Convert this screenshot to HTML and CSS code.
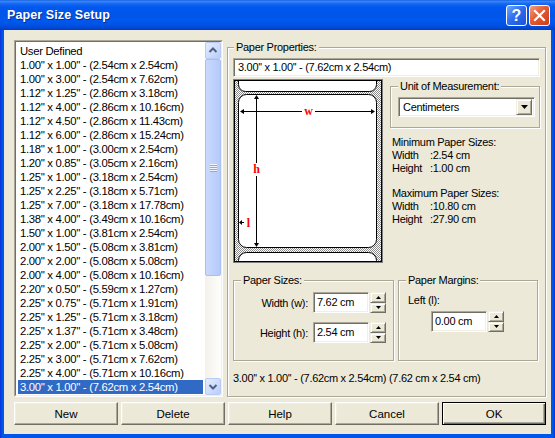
FILE: index.html
```html
<!DOCTYPE html>
<html>
<head>
<meta charset="utf-8">
<link rel="stylesheet" href="styles.css">
</head>
<body>
<div class="window">
  <div class="titlebar">
    <span class="title">Paper Size Setup</span>
    <div class="tb-btns">
      <div class="tb-btn tb-help">?</div>
      <div class="tb-btn tb-close">
        <svg width="19" height="19" viewBox="0 0 19 19"><path d="M5 5 L14 14 M14 5 L5 14" stroke="#fff" stroke-width="2.2" stroke-linecap="square"/></svg>
      </div>
    </div>
  </div>
  <div class="client">
    <div class="main">
      <div class="listbox">
        <div class="listbox-in">
          <div class="rows">
            <div class="row">User Defined</div>
            <div class="row">1.00'' x 1.00'' - (2.54cm x 2.54cm)</div>
            <div class="row">1.00'' x 3.00'' - (2.54cm x 7.62cm)</div>
            <div class="row">1.12'' x 1.25'' - (2.86cm x 3.18cm)</div>
            <div class="row">1.12'' x 4.00'' - (2.86cm x 10.16cm)</div>
            <div class="row">1.12'' x 4.50'' - (2.86cm x 11.43cm)</div>
            <div class="row">1.12'' x 6.00'' - (2.86cm x 15.24cm)</div>
            <div class="row">1.18'' x 1.00'' - (3.00cm x 2.54cm)</div>
            <div class="row">1.20'' x 0.85'' - (3.05cm x 2.16cm)</div>
            <div class="row">1.25'' x 1.00'' - (3.18cm x 2.54cm)</div>
            <div class="row">1.25'' x 2.25'' - (3.18cm x 5.71cm)</div>
            <div class="row">1.25'' x 7.00'' - (3.18cm x 17.78cm)</div>
            <div class="row">1.38'' x 4.00'' - (3.49cm x 10.16cm)</div>
            <div class="row">1.50'' x 1.00'' - (3.81cm x 2.54cm)</div>
            <div class="row">2.00'' x 1.50'' - (5.08cm x 3.81cm)</div>
            <div class="row">2.00'' x 2.00'' - (5.08cm x 5.08cm)</div>
            <div class="row">2.00'' x 4.00'' - (5.08cm x 10.16cm)</div>
            <div class="row">2.20'' x 0.50'' - (5.59cm x 1.27cm)</div>
            <div class="row">2.25'' x 0.75'' - (5.71cm x 1.91cm)</div>
            <div class="row">2.25'' x 1.25'' - (5.71cm x 3.18cm)</div>
            <div class="row">2.25'' x 1.37'' - (5.71cm x 3.48cm)</div>
            <div class="row">2.25'' x 2.00'' - (5.71cm x 5.08cm)</div>
            <div class="row">2.25'' x 3.00'' - (5.71cm x 7.62cm)</div>
            <div class="row">2.25'' x 4.00'' - (5.71cm x 10.16cm)</div>
            <div class="row sel">3.00'' x 1.00'' - (7.62cm x 2.54cm)</div>
            <div class="row">3.00'' x 2.00'' - (7.62cm x 5.08cm)</div>
          </div>
          <div class="vscroll">
            <div class="sb-btn">
              <svg width="14" height="15" viewBox="0 0 14 15"><path d="M3.5 9 L7 5.5 L10.5 9" fill="none" stroke="#4D6185" stroke-width="2"/></svg>
            </div>
            <div class="sb-thumb">
              <div class="grip"><i></i><i></i><i></i><i></i></div>
            </div>
            <div class="sb-track"></div>
            <div class="sb-btn">
              <svg width="14" height="15" viewBox="0 0 14 15"><path d="M3.5 6 L7 9.5 L10.5 6" fill="none" stroke="#4D6185" stroke-width="2"/></svg>
            </div>
          </div>
        </div>
      </div>

      <fieldset class="group props">
        <legend>Paper Properties:</legend>
        <div class="field">3.00'' x 1.00'' - (7.62cm x 2.54cm)</div>
        <div class="mid">
          <svg class="diagram" width="150" height="184" viewBox="0 0 150 184">
            <defs>
              <pattern id="hatch" width="2" height="2" patternUnits="userSpaceOnUse">
                <rect width="2" height="2" fill="#ffffff"/>
                <rect width="1" height="1" fill="#8a8a8a"/>
                <rect x="1" y="1" width="1" height="1" fill="#8a8a8a"/>
              </pattern>
            </defs>
            <rect x="0" y="0" width="150" height="184" fill="url(#hatch)"/>
            <rect x="5.5" y="-12" width="138" height="24.5" rx="7" fill="#fff" stroke="#000"/>
            <rect x="5.5" y="15.5" width="138" height="153" rx="8" fill="#fff" stroke="#000"/>
            <rect x="5.5" y="173.5" width="138" height="30" rx="8" fill="#fff" stroke="#000"/>
            <path d="M8 32.5 H69 M82 32.5 H141" stroke="#000" stroke-width="1"/>
            <path d="M7 32.5 L11 30 L11 35 Z M142 32.5 L138 30 L138 35 Z" fill="#000"/>
            <text x="75.5" y="35.5" class="dlabel" text-anchor="middle">w</text>
            <path d="M23.5 18 V84 M23.5 97 V166" stroke="#000" stroke-width="1"/>
            <path d="M23.5 16 L21 20 L26 20 Z M23.5 168 L21 164 L26 164 Z" fill="#000"/>
            <text x="23.5" y="94" class="dlabel" text-anchor="middle">h</text>
            <path d="M7 143.5 H11" stroke="#000" stroke-width="1"/>
            <path d="M6 143.5 L9 141 L9 146 Z" fill="#000"/>
            <text x="15.5" y="147.5" class="dlabel" text-anchor="middle">l</text>
            <rect x="0.5" y="0.5" width="149" height="183" fill="none" stroke="#808080"/>
            <rect x="1.5" y="1.5" width="147" height="181" fill="none" stroke="#000"/>
          </svg>
          <div class="side">
            <fieldset class="group unit">
              <legend>Unit of Measurement:</legend>
              <div class="combo">
                <span class="combo-text">Centimeters</span>
                <span class="dd-btn"><svg width="7" height="4" viewBox="0 0 7 4"><path d="M0 0 H7 L3.5 4 Z" fill="#000"/></svg></span>
              </div>
            </fieldset>
            <div class="limits">
              <div>Minimum Paper Sizes:</div>
              <div><span class="lk">Width</span>:2.54 cm</div>
              <div><span class="lk">Height</span>:1.00 cm</div>
              <div class="blank"></div>
              <div>Maximum Paper Sizes:</div>
              <div><span class="lk">Width</span>:10.80 cm</div>
              <div><span class="lk">Height</span>:27.90 cm</div>
            </div>
          </div>
        </div>
        <div class="groups">
          <fieldset class="group sizes">
            <legend>Paper Sizes:</legend>
            <div class="srow">
              <span class="slabel">Width (w):</span>
              <div class="num">7.62 cm</div>
              <div class="spin">
                <div class="spin-btn"><svg width="5" height="3" viewBox="0 0 5 3"><path d="M2.5 0 L5 3 H0 Z" fill="#000"/></svg></div>
                <div class="spin-btn"><svg width="5" height="3" viewBox="0 0 5 3"><path d="M0 0 H5 L2.5 3 Z" fill="#000"/></svg></div>
              </div>
            </div>
            <div class="srow">
              <span class="slabel">Height (h):</span>
              <div class="num">2.54 cm</div>
              <div class="spin">
                <div class="spin-btn"><svg width="5" height="3" viewBox="0 0 5 3"><path d="M2.5 0 L5 3 H0 Z" fill="#000"/></svg></div>
                <div class="spin-btn"><svg width="5" height="3" viewBox="0 0 5 3"><path d="M0 0 H5 L2.5 3 Z" fill="#000"/></svg></div>
              </div>
            </div>
          </fieldset>
          <fieldset class="group margins">
            <legend>Paper Margins:</legend>
            <div class="mlabel">Left (l):</div>
            <div class="mrow">
              <div class="num">0.00 cm</div>
              <div class="spin">
                <div class="spin-btn"><svg width="5" height="3" viewBox="0 0 5 3"><path d="M2.5 0 L5 3 H0 Z" fill="#000"/></svg></div>
                <div class="spin-btn"><svg width="5" height="3" viewBox="0 0 5 3"><path d="M0 0 H5 L2.5 3 Z" fill="#000"/></svg></div>
              </div>
            </div>
          </fieldset>
        </div>
        <div class="summary">3.00'' x 1.00'' - (7.62cm x 2.54cm) (7.62 cm x 2.54 cm)</div>
      </fieldset>
    </div>
    <div class="buttons">
      <div class="btn">New</div>
      <div class="btn">Delete</div>
      <div class="btn">Help</div>
      <div class="btn">Cancel</div>
      <div class="btn default">OK</div>
    </div>
  </div>
</div>
</body>
</html>
```
FILE: styles.css
```css
* { box-sizing: border-box; }

html, body {
  margin: 0;
  padding: 0;
}

body {
  width: 555px;
  height: 438px;
  overflow: hidden;
  font-family: "Liberation Sans", Arial, sans-serif;
  font-size: 11px;
  letter-spacing: -0.3px;
  color: #000;
  background: #fff;
}

.window {
  width: 555px;
  height: 438px;
  display: flex;
  flex-direction: column;
  background: linear-gradient(to right, #0831D9 0, #0055EA 2px, #0055EA 553px, #0831D9 555px);
}

.titlebar {
  height: 30px;
  flex: none;
  display: flex;
  align-items: center;
  padding: 0 5px 0 7px;
  background: linear-gradient(to bottom,
    #0A4FD8 0px, #3B8CF8 1px, #2E7DF6 2px, #1566F0 4px, #0058EE 7px,
    #0055EA 14px, #0058EE 20px, #0053E4 25px, #0046D3 28px, #003CC2 30px);
}

.title {
  flex: 1;
  color: #fff;
  font-weight: bold;
  font-size: 12.5px;
  letter-spacing: 0.1px;
  text-shadow: 1px 1px 0 #0A2D8F;
}

.tb-btns {
  display: flex;
  gap: 2px;
  margin-top: 1px;
}

.tb-btn {
  width: 21px;
  height: 21px;
  border: 1px solid #fff;
  border-radius: 3px;
  display: flex;
  align-items: center;
  justify-content: center;
}

.tb-help {
  background: linear-gradient(135deg, #6FA8FF 0%, #2F6FEF 45%, #1C52D6 100%);
  color: #fff;
  font-weight: bold;
  font-size: 16px;
  line-height: 19px;
  letter-spacing: 0;
}

.tb-close {
  background: linear-gradient(135deg, #F3A083 0%, #E25B33 45%, #C93E19 100%);
}

.client {
  flex: 1;
  margin: 0 4px 4px;
  background: #ECE9D8;
  padding: 10px 5px 9px 10px;
  display: flex;
  flex-direction: column;
  gap: 5px;
}

.main {
  height: 357px;
  display: flex;
  gap: 4px;
}

/* list box */
.listbox {
  width: 209px;
  border: 1px solid;
  border-color: #ACA899 #fff #fff #ACA899;
  display: flex;
}

.listbox-in {
  flex: 1;
  display: flex;
  border: 1px solid;
  border-color: #716F64 #F1EFE2 #F1EFE2 #716F64;
  background: #fff;
  min-height: 0;
}

.rows {
  flex: 1;
  padding: 2px 2px 0 2px;
  overflow: hidden;
}

.row {
  height: 14px;
  line-height: 14px;
  padding-left: 2px;
  white-space: nowrap;
  font-size: 11.3px;
}

.row.sel {
  background: #316AC5;
  color: #fff;
}

.vscroll {
  width: 16px;
  display: flex;
  flex-direction: column;
  background: linear-gradient(to right, #F3F1EA, #FEFEFB);
}

.sb-btn {
  height: 17px;
  border: 1px solid #B8CBF5;
  border-radius: 2px;
  background: linear-gradient(135deg, #E4ECFE 0%, #CCDAFC 60%, #B9CCFA 100%);
  display: flex;
  align-items: center;
  justify-content: center;
}

.sb-thumb {
  height: 217px;
  border: 1px solid #A9BFF0;
  border-radius: 2px;
  background: linear-gradient(to right, #CAD9FC, #BFD1FB 50%, #B6CAF9);
  display: flex;
  align-items: center;
  justify-content: center;
}

.grip {
  display: flex;
  flex-direction: column;
  gap: 1px;
}

.grip i {
  display: block;
  width: 7px;
  height: 1px;
  background: #EEF4FE;
  box-shadow: 0 1px 0 #8CA9EE;
}

.sb-track {
  flex: 1;
}

/* group boxes */
.group {
  margin: 0;
  border: 1px solid #ACA899;
  box-shadow: inset 1px 1px 0 #fff, 1px 1px 0 #fff;
  min-width: 0;
}

.group legend {
  padding: 0 2px;
  line-height: 14px;
  background: #ECE9D8;
}

.props {
  flex: 1;
  padding: 4px 5px 0 5px;
  display: flex;
  flex-direction: column;
}

.props > legend {
  margin-left: 1px;
}

.field {
  height: 19px;
  line-height: 17px;
  background: #fff;
  border: 1px solid;
  border-color: #ACA899 #fff #fff #ACA899;
  box-shadow: inset 1px 1px 0 #716F64, inset -1px -1px 0 #F1EFE2;
  padding-left: 4px;
  white-space: nowrap;
}

.mid {
  display: flex;
  margin-top: 2px;
  height: 184px;
}

.diagram {
  display: block;
  flex: none;
}

.dlabel {
  font-family: "Liberation Serif", "Times New Roman", serif;
  font-weight: bold;
  font-size: 12px;
  letter-spacing: 0;
  fill: #FF0000;
}

.side {
  flex: 1;
  margin-left: 7px;
  display: flex;
  flex-direction: column;
}

.unit {
  height: 49px;
  padding: 4px 4px 0 7px;
}

.combo {
  height: 20px;
  background: #fff;
  border: 1px solid;
  border-color: #ACA899 #fff #fff #ACA899;
  box-shadow: inset 1px 1px 0 #716F64, inset -1px -1px 0 #F1EFE2;
  display: flex;
  align-items: center;
  padding: 2px 2px 2px 4px;
}

.combo-text {
  flex: 1;
}

.dd-btn {
  width: 16px;
  height: 16px;
  background: #ECE9D8;
  border: 1px solid;
  border-color: #F1EFE2 #716F64 #716F64 #F1EFE2;
  box-shadow: inset 1px 1px 0 #fff, inset -1px -1px 0 #ACA899;
  display: flex;
  align-items: center;
  justify-content: center;
}

.limits {
  margin-top: 8px;
  padding-left: 2px;
  line-height: 13px;
}

.limits .blank {
  height: 12px;
}

.lk {
  display: inline-block;
  width: 38px;
}

.groups {
  display: flex;
  margin-top: 10px;
  height: 88px;
}

.sizes {
  width: 161px;
  padding: 5px 0 0 0;
}

.sizes > legend {
  margin-left: 7px;
}

.srow {
  display: flex;
  align-items: center;
  height: 21px;
}

.srow + .srow {
  margin-top: 9px;
}

.slabel {
  width: 74px;
  text-align: right;
  margin-right: 5px;
  white-space: nowrap;
}

.num {
  width: 56px;
  height: 21px;
  line-height: 19px;
  background: #fff;
  border: 1px solid;
  border-color: #ACA899 #fff #fff #ACA899;
  box-shadow: inset 1px 1px 0 #716F64, inset -1px -1px 0 #F1EFE2;
  padding-left: 3px;
  white-space: nowrap;
}

.spin {
  width: 16px;
  height: 21px;
  margin-left: 1px;
  display: flex;
  flex-direction: column;
}

.spin-btn {
  flex: 1;
  background: #ECE9D8;
  border: 1px solid;
  border-color: #F1EFE2 #716F64 #716F64 #F1EFE2;
  box-shadow: inset 1px 1px 0 #fff, inset -1px -1px 0 #ACA899;
  display: flex;
  align-items: center;
  justify-content: center;
}

.spin-btn svg {
  display: block;
}

.margins {
  width: 140px;
  margin-left: 4px;
  padding: 0 0 0 7px;
}

.mlabel {
  margin-top: 6px;
  padding-left: 2px;
  line-height: 14px;
}

.mrow {
  display: flex;
  margin-top: 4px;
  margin-left: 25px;
}

.summary {
  margin-top: 10px;
  line-height: 14px;
  white-space: nowrap;
}

/* buttons */
.buttons {
  height: 23px;
  display: flex;
  gap: 3px;
}

.btn {
  width: 104px;
  height: 23px;
  background: #ECE9D8;
  border: 1px solid;
  border-color: #fff #716F64 #716F64 #fff;
  box-shadow: inset -1px -1px 0 #ACA899, inset 1px 1px 0 #F1EFE2;
  display: flex;
  align-items: center;
  justify-content: center;
  font-size: 11.5px;
  letter-spacing: 0;
}

.btn.default {
  border-color: #000;
  box-shadow: inset 1px 1px 0 #fff, inset -1px -1px 0 #716F64, inset -2px -2px 0 #ACA899;
}
```
